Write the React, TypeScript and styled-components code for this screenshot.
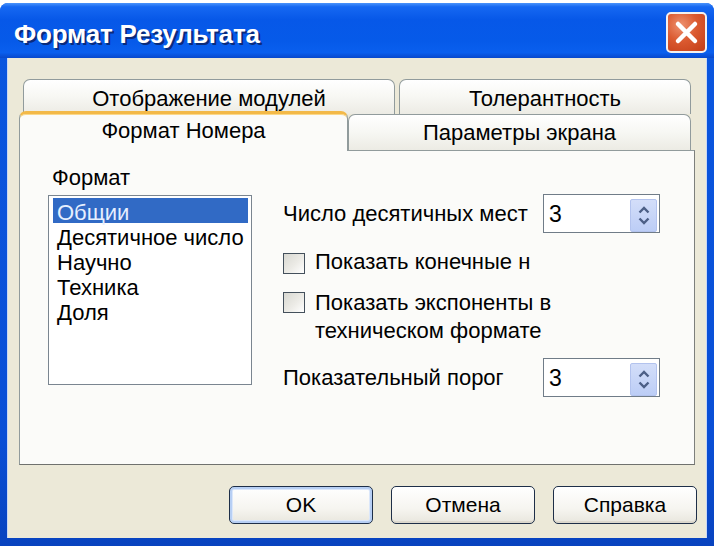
import React from "react";
import styled, { createGlobalStyle, css } from "styled-components";

const GlobalStyle = createGlobalStyle`
  html, body { margin: 0; padding: 0; background: #ffffff; }
  body { font-family: "Liberation Sans", Arial, sans-serif; color: #000; }
  #root { width: 714px; height: 546px; overflow: hidden; }
`;

const Window = styled.div`
  width: 714px;
  height: 543px;
  margin-top: 3px;
  display: flex;
  flex-direction: column;
  background: linear-gradient(to bottom, #0b57e0, #0a4fd6 80%, #0843bf);
  border-radius: 8px 8px 0 0;
  overflow: hidden;
`;

const TitleBar = styled.div`
  height: 55px;
  flex-shrink: 0;
  display: flex;
  align-items: center;
  justify-content: space-between;
  padding: 0 7px 0 14px;
  background: linear-gradient(
    to bottom,
    #4a93fb 0%,
    #1668f2 7%,
    #0758e8 30%,
    #065ae9 70%,
    #0a5fee 90%,
    #0848cc 100%
  );
`;

const Title = styled.div`
  color: #ffffff;
  font-family: "Liberation Sans", Arial, sans-serif;
  font-weight: bold;
  font-size: 26px;
  letter-spacing: -0.2px;
  padding-top: 8px;
  text-shadow: 2px 2px 0 #0a2b7c;
`;

const CloseButton = styled.div`
  width: 41px;
  height: 41px;
  margin-top: 4px;
  box-sizing: border-box;
  border: 2px solid #f4f1f0;
  border-radius: 5px;
  background: radial-gradient(circle at 35% 30%, #ee9270 0%, #db5a30 45%, #c23d17 100%);
  display: flex;
  align-items: center;
  justify-content: center;
`;

const Body = styled.div`
  flex: 1;
  margin: 0 7px 8px;
  background: #ece9d8;
  padding: 21px 12px 14px;
  display: flex;
  flex-direction: column;
  box-shadow: inset 1px 0 0 #c9d8f5, inset -1px 0 0 #c9d8f5;
`;

const TabStrip = styled.div`
  display: flex;
  flex-direction: column;
`;

const BackRow = styled.div`
  display: flex;
  gap: 4px;
  padding-left: 4px;
  height: 35px;
`;

const FrontRow = styled.div`
  display: flex;
  align-items: flex-start;
  height: 40px;
  margin-top: -3px;
  margin-bottom: -1px;
`;

const Tab = styled.div<{ $w: number; $active?: boolean; $low?: boolean }>`
  position: relative;
  box-sizing: border-box;
  width: ${(p) => p.$w}px;
  height: 35px;
  border: 1px solid #919b9c;
  border-bottom: none;
  border-radius: 7px 7px 0 0;
  background: linear-gradient(to bottom, #ffffff 0%, #f7f7f3 50%, #ecebe4 100%);
  font-size: 22px;
  line-height: 24px;
  padding-top: 7px;
  text-align: center;
  white-space: nowrap;
  ${(p) =>
    p.$low &&
    css`
      height: 36px;
      margin-top: 3px;
      padding-top: 6px;
    `}
  ${(p) =>
    p.$active &&
    css`
      z-index: 2;
      height: 40px;
      padding-top: 5px;
      border-top: 3px solid #f3b948;
      box-shadow: inset 0 1px 0 #fbd88a;
      background: #fbfbf9;
    `}
`;

const Panel = styled.div`
  box-sizing: border-box;
  height: 315px;
  background: #fbfbf9;
  border: 1px solid #919b9c;
  border-right-color: #7d7f7c;
  border-bottom-color: #6f716e;
  display: grid;
  grid-template-columns: 204px 1fr;
  column-gap: 31px;
  align-items: start;
  padding: 15px 0 0 28px;
`;

const LeftCol = styled.div`
  display: flex;
  flex-direction: column;
`;

const GroupLabel = styled.div`
  font-size: 22px;
  line-height: 24px;
  margin-left: 4px;
`;

const ListBox = styled.div`
  box-sizing: border-box;
  margin-top: 5px;
  width: 204px;
  height: 190px;
  background: #ffffff;
  border: 1px solid #7a8590;
  padding: 2px 3px 0 4px;
`;

const ListItem = styled.div<{ $selected?: boolean }>`
  box-sizing: border-box;
  height: 25px;
  padding: 3px 0 0 4px;
  font-size: 22px;
  line-height: 23px;
  white-space: nowrap;
  ${(p) =>
    p.$selected &&
    css`
      background: #316ac5;
      color: #e6efff;
    `}
`;

const RightCol = styled.div`
  margin-top: 28px;
  display: flex;
  flex-direction: column;
`;

const Row = styled.div<{ $mt?: number }>`
  display: flex;
  align-items: center;
  margin-top: ${(p) => p.$mt ?? 0}px;
`;

const CheckRow = styled.div<{ $mt?: number; $lh: number }>`
  display: flex;
  align-items: flex-start;
  margin-top: ${(p) => p.$mt ?? 0}px;
  font-size: 22px;
  line-height: ${(p) => p.$lh}px;
`;

const FieldLabel = styled.div`
  width: 260px;
  font-size: 22px;
  line-height: 24px;
  white-space: nowrap;
`;

const Spinner = styled.div`
  box-sizing: border-box;
  width: 117px;
  height: 39px;
  background: #ffffff;
  border: 1px solid #707c88;
  display: flex;
  align-items: center;
  justify-content: space-between;
  padding: 0 2px 0 5px;
`;

const SpinValue = styled.div`
  font-size: 23px;
  line-height: 24px;
`;

const SpinButtons = styled.div`
  box-sizing: border-box;
  width: 27px;
  height: 33px;
  margin-top: 3px;
  border: 1px solid #b3c3ee;
  border-radius: 2px;
  background: linear-gradient(to bottom, #d3def9, #bccdf6);
  display: flex;
  flex-direction: column;
  align-items: center;
  justify-content: center;
  gap: 3px;
`;

const CheckBox = styled.div<{ $mt: number }>`
  box-sizing: border-box;
  flex-shrink: 0;
  width: 22px;
  height: 21px;
  margin-top: ${(p) => p.$mt}px;
  margin-right: 10px;
  border: 1px solid #44505c;
  background: linear-gradient(135deg, #d8d8d2 0%, #ecebe6 55%, #ffffff 100%);
`;

const ButtonRow = styled.div`
  display: flex;
  justify-content: flex-end;
  gap: 18px;
  margin-top: 21px;
  margin-right: -2px;
`;

const Button = styled.div<{ $default?: boolean }>`
  box-sizing: border-box;
  width: 144px;
  height: 38px;
  border: 1px solid #1e2f48;
  border-radius: 5px;
  background: linear-gradient(to bottom, #ffffff 0%, #f6f5f0 60%, #e8e6dd 100%);
  font-size: 21px;
  line-height: 36px;
  text-align: center;
  box-shadow: inset 0 -2px 0 #dcd8cd;
  ${(p) =>
    p.$default &&
    css`
      box-shadow: inset 0 0 0 2px #b7cff4, inset 0 0 0 3px #dbe7fa;
    `}
`;

const Chevron = ({ up }: { up?: boolean }) => (
  <svg width="12" height="8" viewBox="0 0 12 8">
    <path
      d={up ? "M1.5 6.5 L6 2 L10.5 6.5" : "M1.5 1.5 L6 6 L10.5 1.5"}
      fill="none"
      stroke="#4c5f86"
      strokeWidth="2.4"
    />
  </svg>
);

const SpinBox = ({ value }: { value: string }) => (
  <Spinner>
    <SpinValue>{value}</SpinValue>
    <SpinButtons>
      <Chevron up />
      <Chevron />
    </SpinButtons>
  </Spinner>
);

export default function App() {
  return (
    <>
      <GlobalStyle />
      <Window>
        <TitleBar>
          <Title>Формат Результата</Title>
          <CloseButton>
            <svg width="25" height="25" viewBox="0 0 25 25">
              <path d="M4 4 L21 21 M21 4 L4 21" stroke="#ffffff" strokeWidth="4.5" strokeLinecap="round" />
            </svg>
          </CloseButton>
        </TitleBar>
        <Body>
          <TabStrip>
            <BackRow>
              <Tab $w={372}>Отображение модулей</Tab>
              <Tab $w={292}>Толерантность</Tab>
            </BackRow>
            <FrontRow>
              <Tab $w={329} $active>
                Формат Номера
              </Tab>
              <Tab $w={343} $low>
                Параметры экрана
              </Tab>
            </FrontRow>
          </TabStrip>
          <Panel>
            <LeftCol>
              <GroupLabel>Формат</GroupLabel>
              <ListBox>
                <ListItem $selected>Общии</ListItem>
                <ListItem>Десятичное число</ListItem>
                <ListItem>Научно</ListItem>
                <ListItem>Техника</ListItem>
                <ListItem>Доля</ListItem>
              </ListBox>
            </LeftCol>
            <RightCol>
              <Row>
                <FieldLabel>Число десятичных мест</FieldLabel>
                <SpinBox value="3" />
              </Row>
              <CheckRow $mt={17} $lh={24}>
                <CheckBox $mt={3} />
                <span>Показать конечные н</span>
              </CheckRow>
              <CheckRow $mt={15} $lh={28}>
                <CheckBox $mt={3} />
                <span>
                  Показать экспоненты в
                  <br />
                  техническом формате
                </span>
              </CheckRow>
              <Row $mt={13}>
                <FieldLabel>Показательный порог</FieldLabel>
                <SpinBox value="3" />
              </Row>
            </RightCol>
          </Panel>
          <ButtonRow>
            <Button $default>OK</Button>
            <Button>Отмена</Button>
            <Button>Справка</Button>
          </ButtonRow>
        </Body>
      </Window>
    </>
  );
}
